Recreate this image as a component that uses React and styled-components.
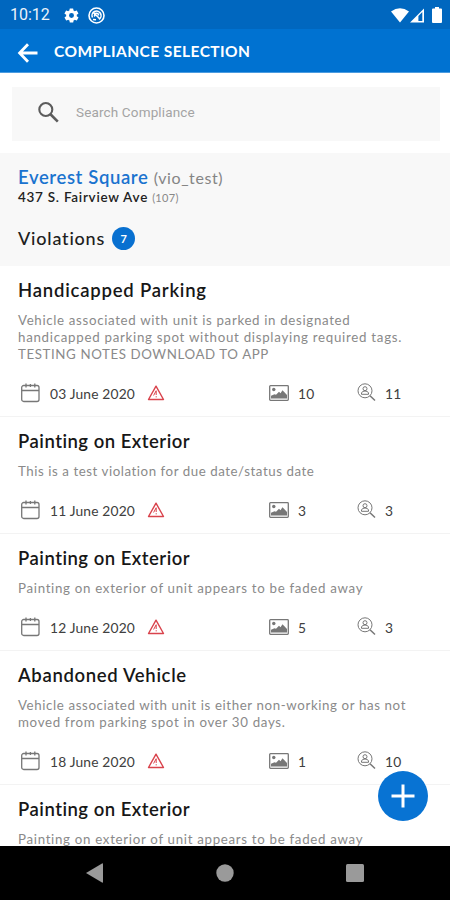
import React from 'react';
import styled, { createGlobalStyle } from 'styled-components';

const GlobalStyle = createGlobalStyle`
  * {
    box-sizing: border-box;
  }

  body {
    margin: 0;
    background-color: #fff;
    font-family: Lato, 'Liberation Sans', sans-serif;
  }
`;

const Screen = styled.div`
  position: relative;
  display: flex;
  flex-direction: column;
  width: 450px;
  height: 900px;
  overflow: hidden;
  background-color: #fff;
`;

const StatusBar = styled.div`
  display: flex;
  align-items: center;
  flex: 0 0 28px;
  padding: 1px 8px 0 10px;
  color: #fff;
  background-color: #0067bf;
`;

const Clock = styled.span`
  width: 53px;
  font-family: Roboto, sans-serif;
  font-size: 16px;
  line-height: 28px;
  opacity: 0.92;
`;

const StatusIcons = styled.div`
  display: flex;
  align-items: center;
  gap: ${(props) => props.$gap}px;
`;

const Reception = styled(StatusIcons)`
  margin: 0 8px 0 auto;
`;

const AppBar = styled.header`
  display: flex;
  align-items: center;
  flex: 0 0 44px;
  padding: 0 17px;
  color: #fff;
  background-color: #0072d1;
  border-bottom: 1px solid #4c9ce0;
`;

const BackButton = styled.button`
  display: flex;
  width: 22px;
  height: 22px;
  margin: 5px 15px 0 0;
  padding: 0;
  border: 0;
  color: inherit;
  background: none;
`;

const ScreenTitle = styled.h1`
  margin: 1px 0 0;
  font-size: 15.5px;
  font-weight: 700;
  line-height: 22px;
  letter-spacing: 0.43px;
`;

const SearchBox = styled.label`
  display: flex;
  align-items: center;
  flex: 0 0 54px;
  margin: 14px 10px 12px 12px;
  padding: 0 0 4px 25px;
  background-color: #f8f8f8;
`;

const SearchInput = styled.input`
  width: 300px;
  margin-left: 16px;
  padding: 0;
  border: 0;
  outline: 0;
  background: none;
  font-family: Roboto, sans-serif;
  font-size: 13.5px;
  letter-spacing: 0.15px;

  &::placeholder {
    color: #a4a4a4;
    opacity: 1;
  }
`;

const Property = styled.section`
  flex: 0 0 113px;
  padding: 13px 18px 0;
  background-color: #f8f8f8;
`;

const PropertyName = styled.div`
  color: #1a73cf;
  font-size: 18.5px;
  font-weight: 600;
  line-height: 23px;
  letter-spacing: 0.62px;
  white-space: nowrap;
`;

const PropertyCode = styled.span`
  color: #858585;
  font-size: 16px;
  font-weight: 400;
  letter-spacing: 0.6px;
`;

const Address = styled.div`
  color: #222;
  font-size: 13.5px;
  font-weight: 600;
  line-height: 17px;
  letter-spacing: 0.73px;
  white-space: nowrap;
`;

const UnitCount = styled.span`
  color: #888;
  font-size: 11px;
  font-weight: 400;
  letter-spacing: 0.3px;
`;

const SectionHeading = styled.h2`
  display: flex;
  align-items: center;
  margin: 20px 0 0;
  color: #202020;
  font-size: 18px;
  font-weight: 500;
  line-height: 24px;
  letter-spacing: 0.8px;
`;

const Badge = styled.span`
  width: 23px;
  height: 23px;
  margin-left: 7px;
  border-radius: 50%;
  color: #fff;
  background-color: #0870d0;
  font-size: 11px;
  font-weight: 700;
  line-height: 23px;
  text-align: center;
  letter-spacing: 0;
`;

const List = styled.ul`
  flex: 1 1 0;
  min-height: 0;
  margin: 0;
  padding: 0;
  overflow: hidden;
  list-style: none;
`;

const Item = styled.li`
  padding: 12px 18px;
  border-bottom: 1px solid #f3f3f3;
`;

const ItemTitle = styled.h3`
  margin: 0;
  color: #171717;
  font-size: 18.5px;
  font-weight: 600;
  line-height: 25px;
  letter-spacing: ${(props) => props.$spacing}px;
`;

const Notes = styled.p`
  margin: 9px 0 18px;
  color: #8a8a8a;
  font-size: 13.3px;
  line-height: 17px;
`;

const NoteLine = styled.span`
  display: block;
  letter-spacing: ${(props) => props.$spacing}px;
  white-space: nowrap;
`;

const Meta = styled.div`
  display: grid;
  grid-template-columns: 251px 88px 1fr;
  height: 23px;
`;

const MetaCell = styled.div`
  display: flex;
  align-items: center;
  color: #404040;
  font-size: 13.8px;
  letter-spacing: 0.17px;
`;

const DateText = styled.span`
  width: 87px;
  margin: 1px 10px 0 9px;
  white-space: nowrap;
`;

const Count = styled.span`
  margin: 1px 0 0 9px;
`;

const AddButton = styled.button`
  position: absolute;
  right: 22px;
  bottom: 79px;
  display: flex;
  align-items: center;
  justify-content: center;
  width: 50px;
  height: 50px;
  padding: 0;
  border: 0;
  border-radius: 50%;
  color: #fff;
  background-color: #0873d3;
`;

const NavBar = styled.nav`
  display: flex;
  align-items: center;
  justify-content: space-between;
  flex: 0 0 54px;
  padding: 0 86px;
  background-color: #000;
`;

const GearIcon = () => (
  <svg width="17" height="17" viewBox="0 0 24 24" fill="currentColor">
    <path
      fillRule="evenodd"
      d="M19.4 13a7.5 7.5 0 0 0 0-2l2.1-1.6a.5.5 0 0 0 .1-.6l-2-3.5a.5.5 0 0 0-.6-.2l-2.5 1a7.3 7.3 0 0 0-1.7-1l-.4-2.6a.5.5 0 0 0-.5-.4h-4a.5.5 0 0 0-.5.4L9 5.1a7.7 7.7 0 0 0-1.7 1l-2.5-1a.5.5 0 0 0-.6.2l-2 3.5a.5.5 0 0 0 .1.6L4.5 11a7.9 7.9 0 0 0 0 2l-2.1 1.6a.5.5 0 0 0-.1.6l2 3.5a.5.5 0 0 0 .6.2l2.5-1a7.3 7.3 0 0 0 1.7 1l.4 2.6a.5.5 0 0 0 .5.4h4a.5.5 0 0 0 .5-.4l.4-2.6a7.7 7.7 0 0 0 1.7-1l2.5 1a.5.5 0 0 0 .6-.2l2-3.5a.5.5 0 0 0-.1-.6zM12 15.5a3.5 3.5 0 1 1 0-7 3.5 3.5 0 0 1 0 7z"
    />
  </svg>
);

const CaptureIcon = () => (
  <svg
    width="17"
    height="17"
    viewBox="0 0 17 17"
    fill="none"
    stroke="currentColor"
    strokeWidth="1.6"
  >
    <circle cx="8.5" cy="8.5" r="7.5" />
    <path d="M4.5 10.5A4.5 4.5 0 1 1 11 12.3M5.5 5.5l6.500 6.500M7 9.500a2 2 0 1 1 3.500-1M5 12.500l3 .3" />
  </svg>
);

const WifiIcon = () => (
  <svg width="18" height="15" viewBox="0 0 18 15" fill="currentColor">
    <path d="M0 3.5Q9-3 18 3.5L9 14.5z" />
  </svg>
);

const SignalIcon = () => (
  <svg width="14" height="15" viewBox="0 0 15 15" fill="currentColor">
    <path fillRule="evenodd" d="M0 15L15 0v15zM9 8v5.5h4.200V3.800z" />
  </svg>
);

const BatteryIcon = () => (
  <svg width="10" height="16" viewBox="0 0 10 16" fill="currentColor">
    <path d="M3 0h4v1.5h2a1 1 0 0 1 1 1V15a1 1 0 0 1-1 1H1a1 1 0 0 1-1-1V2.5a1 1 0 0 1 1-1h2z" />
  </svg>
);

const BackIcon = () => (
  <svg
    width="22"
    height="22"
    viewBox="0 0 22 22"
    fill="none"
    stroke="currentColor"
    strokeWidth="2.8"
  >
    <path d="M11 2.2L2.600 11l8.400 8.800M3 11h17.500" />
  </svg>
);

const SearchIcon = () => (
  <svg
    width="23"
    height="23"
    viewBox="0 0 23 23"
    fill="none"
    stroke="#5c5c5c"
    strokeWidth="2.1"
  >
    <circle cx="8.8" cy="8.5" r="6.500" />
    <path d="M13.200 13l7.600 7.600" strokeWidth="2.6" />
  </svg>
);

const CalendarIcon = () => (
  <svg
    width="23"
    height="20"
    viewBox="0 0 23 20"
    fill="none"
    stroke="#777"
    strokeWidth="1.3"
  >
    <rect x="3.7" y="2.5" width="17.3" height="16" rx="2" />
    <path d="M4 7.500h17M8 .5v4M16.800 .5v4M12.400 1v3" />
  </svg>
);

const AlertIcon = () => (
  <svg
    width="18"
    height="16"
    viewBox="0 0 18 16"
    fill="none"
    stroke="#d9434c"
    strokeWidth="1.4"
    strokeLinejoin="round"
  >
    <path d="M9 1.200L16.500 14.500H1.500z" />
    <path d="M9.200 5.500v4.500M9 6l-2.400 4.500M9.200 11.200v1.200" strokeWidth="1" />
  </svg>
);

const PictureIcon = () => (
  <svg width="20" height="16" viewBox="0 0 20 16" fill="#777">
    <rect
      x="0.7"
      y="0.7"
      width="18.6"
      height="14.6"
      rx="0.8"
      fill="none"
      stroke="#777"
      strokeWidth="1.3"
    />
    <path d="M2 13.500V10.800l3.500-1.600 1.500.5 3-3 1.500 1.500 2-3L18 10v3.500z" />
    <circle cx="4.8" cy="4.5" r="1.7" />
  </svg>
);

const InspectIcon = () => (
  <svg
    width="19"
    height="19"
    viewBox="0 0 19 19"
    fill="none"
    stroke="#777"
    strokeWidth="1"
  >
    <circle cx="8" cy="7.8" r="7" />
    <circle cx="8" cy="5.7" r="2" />
    <path d="M4.500 11.300V10Q5 8 8 8t3.500 2v1.300z" />
    <path d="M13 12.800l5 4.700" strokeWidth="1.5" />
  </svg>
);

const PlusIcon = () => (
  <svg width="24" height="24" viewBox="0 0 24 24" stroke="currentColor">
    <path d="M12 .5v23M.5 12h23" strokeWidth="3" />
  </svg>
);

const NavBackIcon = () => (
  <svg width="17" height="20" viewBox="0 0 17 20" fill="#9a9a9a">
    <path d="M0 10L16 .5q1-.5 1 .7v17.600q0 1.200-1 .7z" />
  </svg>
);

const NavHomeIcon = () => (
  <svg width="18" height="18" viewBox="0 0 18 18" fill="#9a9a9a">
    <circle cx="9" cy="9" r="8.7" />
  </svg>
);

const NavRecentIcon = () => (
  <svg width="18" height="18" viewBox="0 0 18 18" fill="#9a9a9a">
    <rect width="18" height="18" rx="1.5" />
  </svg>
);

const violations = [
  {
    id: 1,
    title: 'Handicapped Parking',
    spacing: 0.78,
    notes: [
      { text: 'Vehicle associated with unit is parked in designated', spacing: 0.66 },
      { text: 'handicapped parking spot without displaying required tags.', spacing: 0.72 },
      { text: 'TESTING NOTES DOWNLOAD TO APP', spacing: 0.6 },
    ],
    date: '03 June 2020',
    pictures: 10,
    inspections: 11,
  },
  {
    id: 2,
    title: 'Painting on Exterior',
    spacing: 0.5,
    notes: [{ text: 'This is a test violation for due date/status date', spacing: 0.55 }],
    date: '11 June 2020',
    pictures: 3,
    inspections: 3,
  },
  {
    id: 3,
    title: 'Painting on Exterior',
    spacing: 0.5,
    notes: [{ text: 'Painting on exterior of unit appears to be faded away', spacing: 0.69 }],
    date: '12 June 2020',
    pictures: 5,
    inspections: 3,
  },
  {
    id: 4,
    title: 'Abandoned Vehicle',
    spacing: 0.66,
    notes: [
      { text: 'Vehicle associated with unit is either non-working or has not', spacing: 0.61 },
      { text: 'moved from parking spot in over 30 days.', spacing: 0.67 },
    ],
    date: '18 June 2020',
    pictures: 1,
    inspections: 10,
  },
  {
    id: 5,
    title: 'Painting on Exterior',
    spacing: 0.5,
    notes: [{ text: 'Painting on exterior of unit appears to be faded away', spacing: 0.69 }],
  },
];

const Violation = ({ title, spacing, notes, date, pictures, inspections }) => (
  <Item>
    <ItemTitle $spacing={spacing}>{title}</ItemTitle>
    <Notes>
      {notes.map((line) => (
        <NoteLine key={line.text} $spacing={line.spacing}>
          {line.text}
        </NoteLine>
      ))}
    </Notes>
    {date && (
      <Meta>
        <MetaCell>
          <CalendarIcon />
          <DateText>{date}</DateText>
          <AlertIcon />
        </MetaCell>
        <MetaCell>
          <PictureIcon />
          <Count>{pictures}</Count>
        </MetaCell>
        <MetaCell>
          <InspectIcon />
          <Count>{inspections}</Count>
        </MetaCell>
      </Meta>
    )}
  </Item>
);

const App = () => (
  <>
    <GlobalStyle />
    <Screen>
      <StatusBar>
        <Clock>10:12</Clock>
        <StatusIcons $gap={8}>
          <GearIcon />
          <CaptureIcon />
        </StatusIcons>
        <Reception $gap={1}>
          <WifiIcon />
          <SignalIcon />
        </Reception>
        <BatteryIcon />
      </StatusBar>
      <AppBar>
        <BackButton aria-label="Back">
          <BackIcon />
        </BackButton>
        <ScreenTitle>COMPLIANCE SELECTION</ScreenTitle>
      </AppBar>
      <SearchBox>
        <SearchIcon />
        <SearchInput placeholder="Search Compliance" />
      </SearchBox>
      <Property>
        <PropertyName>
          Everest Square <PropertyCode>(vio_test)</PropertyCode>
        </PropertyName>
        <Address>
          437 S. Fairview Ave <UnitCount>(107)</UnitCount>
        </Address>
        <SectionHeading>
          Violations
          <Badge>7</Badge>
        </SectionHeading>
      </Property>
      <List>
        {violations.map((violation) => (
          <Violation key={violation.id} {...violation} />
        ))}
      </List>
      <NavBar>
        <NavBackIcon />
        <NavHomeIcon />
        <NavRecentIcon />
      </NavBar>
      <AddButton aria-label="Add violation">
        <PlusIcon />
      </AddButton>
    </Screen>
  </>
);

export default App;
